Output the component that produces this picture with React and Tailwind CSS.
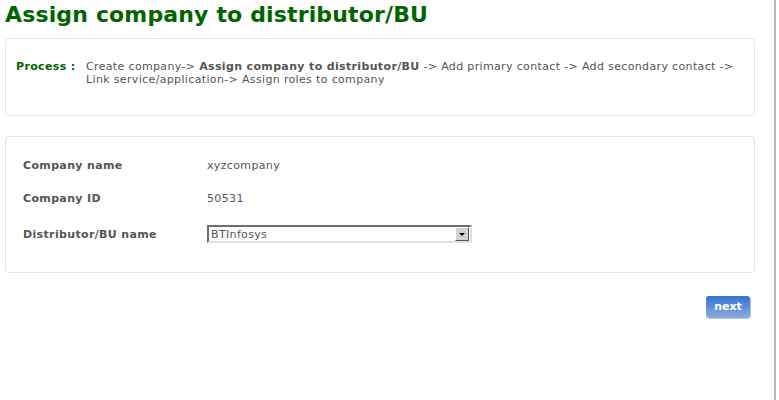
export default function App() {
  const rows = [
    { label: "Company name", value: "xyzcompany" },
    { label: "Company ID", value: "50531" },
  ];

  return (
    <div className="flex h-[400px] w-[779px] bg-white font-['DejaVu_Sans',Verdana,sans-serif] text-[11px] tracking-[0.35px] text-[#555]">
      <div className="w-[776px] shrink-0 border-r-2 border-[#b3bcc6] px-[5px]">
        <h1 className="pt-[1px] text-[22px] font-bold leading-[27px] tracking-[0.15px] text-[#006400]">
          Assign company to distributor/BU
        </h1>

        {/* process steps */}
        <div className="mt-[10px] h-[78px] w-[750px] rounded-[3px] border border-[#e6e6e6] pl-[10px] pr-2 pt-[21px]">
          <div className="flex leading-[13px]">
            <span className="w-[70px] shrink-0 font-bold text-[#006400]">Process :</span>
            <p className="text-[#555]">
              Create company-&gt; <b>Assign company to distributor/BU</b> <span className="whitespace-nowrap">-&gt;</span> Add primary contact <span className="whitespace-nowrap">-&gt;</span> Add secondary contact <span className="whitespace-nowrap">-&gt;</span> Link service/application-&gt; Assign roles to company
            </p>
          </div>
        </div>

        {/* company form */}
        <div className="mt-[20px] flex h-[137px] w-[750px] flex-col gap-[20px] rounded-[3px] border border-[#e6e6e6] pl-[17px] pt-[22px]">
          {rows.map((r) => (
            <div key={r.label} className="flex h-[13px] items-center leading-[13px]">
              <span className="w-[184px] font-bold">{r.label}</span>
              <span>{r.value}</span>
            </div>
          ))}
          <div className="flex items-center leading-[13px]">
            <span className="w-[184px] font-bold">Distributor/BU name</span>
            <div className="flex h-[18px] w-[265px] items-center border-2 border-b-[#e0e0e0] border-l-[#6e6e6e] border-r-[#e0e0e0] border-t-[#6e6e6e] bg-white">
              <span className="flex-1 pl-[2px]">BTInfosys</span>
              <span className="mr-[1px] flex h-[14px] w-[14px] items-center justify-center border border-b-[#555] border-l-white border-r-[#555] border-t-white bg-[#d6d3ce]">
                <span className="h-0 w-0 border-l-[3px] border-r-[3px] border-t-[3px] border-l-transparent border-r-transparent border-t-black" />
              </span>
            </div>
          </div>
        </div>

        <div className="mt-[23px] flex w-[745px] justify-end">
          <button className="h-[22px] w-[44px] rounded-[3px] bg-gradient-to-b from-[#3471d4] to-[#8eaadc] text-[11px] font-bold tracking-normal text-white shadow-[1px_1px_1px_#b8c4d6]">
            next
          </button>
        </div>
      </div>
    </div>
  );
}
